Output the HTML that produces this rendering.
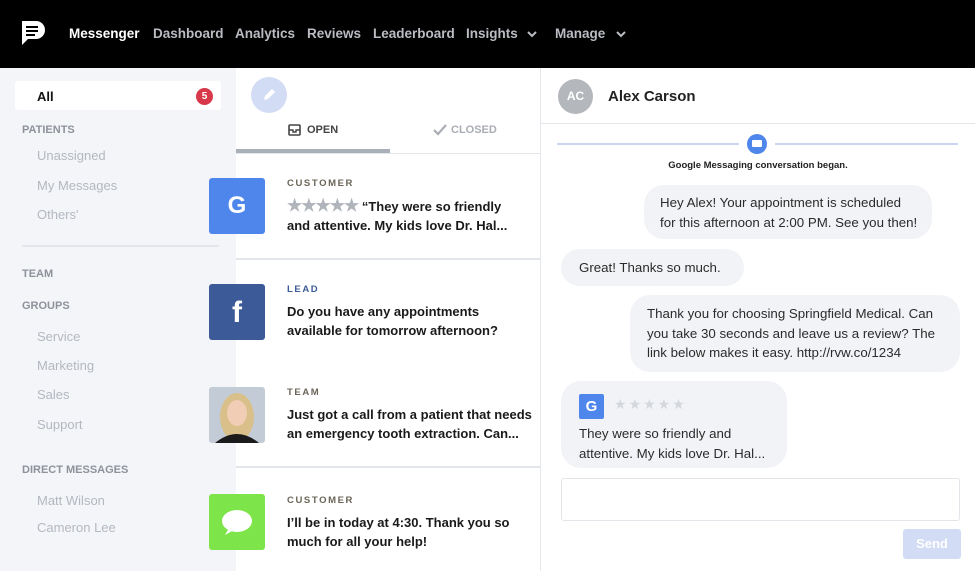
<!DOCTYPE html>
<html><head><meta charset="utf-8"><style>
*{box-sizing:border-box;margin:0;padding:0}
body{width:975px;height:571px;overflow:hidden;font-family:"Liberation Sans",sans-serif;background:#fff;position:relative}
.hdr{position:absolute;left:0;top:0;width:975px;height:68px;background:#000}
.nav{position:absolute;top:26px;font-size:13.5px;font-weight:bold;color:#b9bcc2}
.side{position:absolute;left:0;top:68px;width:236px;height:503px;background:#f4f5f8}
.s{position:absolute;font-size:13px;color:#b3b8c0}
.sh{position:absolute;font-size:11px;font-weight:bold;color:#8d929b}
.list{position:absolute;left:236px;top:68px;width:305px;height:503px;background:#fff;border-right:1px solid #e4e7ec}
.chat{position:absolute;left:541px;top:68px;width:434px;height:503px}
.tag{position:absolute;left:287px;font-size:9.5px;font-weight:bold;letter-spacing:1.6px;color:#6b6558}
.msg{position:absolute;left:287px;font-size:13px;font-weight:bold;color:#1a1a1a;line-height:19px;white-space:nowrap}
.ic{position:absolute;left:209px;width:56px;height:56px;border-radius:3px}
.b{position:absolute;background:#f2f3f6;border-radius:20px;font-size:13.3px;color:#2b2b2b;line-height:19.5px;white-space:nowrap}
.hl{position:absolute;height:1px;background:#e3e6eb}
</style></head><body>
<div class="hdr">
<svg style="position:absolute;left:20px;top:19px" width="27" height="28" viewBox="0 0 27 28"><path d="M2 2h14a9 9 0 0 1 0 18H8l-6 6z" fill="#fff"/><rect x="6" y="7" width="12" height="2" fill="#000"/><rect x="6" y="11" width="12" height="2" fill="#000"/><rect x="6" y="15" width="9" height="2" fill="#000"/></svg>
<div class="nav" style="left:69px;color:#fff">Messenger</div>
<div class="nav" style="left:153px">Dashboard</div>
<div class="nav" style="left:235px">Analytics</div>
<div class="nav" style="left:307px">Reviews</div>
<div class="nav" style="left:373px">Leaderboard</div>
<div class="nav" style="left:466px">Insights</div>
<svg style="position:absolute;left:527px;top:31px" width="10" height="7"><path d="M1 1l4 4 4-4" stroke="#b9bcc2" stroke-width="2" fill="none"/></svg>
<div class="nav" style="left:555px">Manage</div>
<svg style="position:absolute;left:616px;top:31px" width="10" height="7"><path d="M1 1l4 4 4-4" stroke="#b9bcc2" stroke-width="2" fill="none"/></svg>
</div>
<div class="side">
<div style="position:absolute;left:15px;top:13px;width:206px;height:29px;background:#fff;border-radius:3px"></div>
<div style="position:absolute;left:37px;top:21px;font-size:13px;font-weight:bold;color:#111">All</div>
<div style="position:absolute;left:196px;top:20px;width:17px;height:17px;border-radius:50%;background:#d8394a;color:#fff;font-size:10px;font-weight:bold;text-align:center;line-height:17px">5</div>
<div class="sh" style="left:22px;top:56px">PATIENTS</div>
<div class="s" style="left:37px;top:80px">Unassigned</div>
<div class="s" style="left:37px;top:110px">My Messages</div>
<div class="s" style="left:37px;top:139px">Others'</div>
<div class="hl" style="left:22px;top:177px;width:197px;height:2px"></div>
<div class="sh" style="left:22px;top:200px">TEAM</div>
<div class="sh" style="left:22px;top:232px">GROUPS</div>
<div class="s" style="left:37px;top:261px">Service</div>
<div class="s" style="left:37px;top:290px">Marketing</div>
<div class="s" style="left:37px;top:319px">Sales</div>
<div class="s" style="left:37px;top:349px">Support</div>
<div class="sh" style="left:22px;top:396px">DIRECT MESSAGES</div>
<div class="s" style="left:37px;top:425px">Matt Wilson</div>
<div class="s" style="left:37px;top:452px">Cameron Lee</div>
</div>
<div class="list">
<div style="position:absolute;left:15px;top:9px;width:36px;height:36px;border-radius:50%;background:#d3dcf5"></div>
<svg style="position:absolute;left:25px;top:19px" width="16" height="16"><path d="M3 13l1-4 7-7 3 3-7 7z" fill="#fff"/></svg>
<svg style="position:absolute;left:52px;top:56px" width="13" height="12"><rect x="1" y="1" width="11" height="10" rx="1" fill="none" stroke="#444" stroke-width="1.6"/><path d="M1 6h4v2h3V6h4" stroke="#444" stroke-width="1.4" fill="none"/></svg>
<div style="position:absolute;left:71px;top:56px;font-size:11px;font-weight:bold;color:#444">OPEN</div>
<svg style="position:absolute;left:197px;top:56px" width="14" height="12"><path d="M1 6l4 4 8-9" stroke="#a9adb4" stroke-width="2.2" fill="none"/></svg>
<div style="position:absolute;left:215px;top:56px;font-size:11px;font-weight:bold;color:#a9adb4">CLOSED</div>
<div style="position:absolute;left:0;top:81px;width:154px;height:4px;background:#a9b0b8"></div>
<div class="hl" style="left:0;top:85px;width:305px"></div>
<div class="hl" style="left:0;top:190px;width:305px;height:2px"></div>
<div class="hl" style="left:0;top:398px;width:305px;height:2px"></div>
</div>
<div class="ic" style="top:178px;background:#4f86ec;color:#fff;font-size:24px;font-weight:bold;text-align:center;line-height:56px">G</div>
<div class="tag" style="top:178px">CUSTOMER</div>
<div class="msg" style="top:196px"><span style="color:#b0b4bb;font-size:17px;letter-spacing:-1px">★★★★★</span> “They were so friendly<br>and attentive. My kids love Dr. Hal...</div>
<div class="ic" style="top:284px;background:#3d5a98;color:#fff;font-size:30px;font-weight:bold;text-align:center;line-height:58px">f</div>
<div class="tag" style="top:284px;color:#3d5a98">LEAD</div>
<div class="msg" style="top:302px">Do you have any appointments<br>available for tomorrow afternoon?</div>
<div class="ic" style="top:387px;background:#c3ccd6;overflow:hidden"><svg width="56" height="56"><ellipse cx="28" cy="30" rx="17" ry="24" fill="#d9bf8a"/><ellipse cx="28" cy="26" rx="10" ry="13" fill="#f0cdb4"/><path d="M6 56q22-18 44 0z" fill="#1b1b1b"/></svg></div>
<div class="tag" style="top:387px">TEAM</div>
<div class="msg" style="top:405px">Just got a call from a patient that needs<br>an emergency tooth extraction. Can...</div>
<div class="ic" style="top:494px;background:#7de449"><svg width="56" height="56"><ellipse cx="28" cy="27" rx="15" ry="11" fill="#fff"/><path d="M20 34l-4 7 9-5z" fill="#fff"/></svg></div>
<div class="tag" style="top:495px">CUSTOMER</div>
<div class="msg" style="top:513px">I’ll be in today at 4:30. Thank you so<br>much for all your help!</div>
<div class="chat">
<div style="position:absolute;left:17px;top:11px;width:35px;height:35px;border-radius:50%;background:#b4b8bd;color:#fff;font-size:12px;font-weight:bold;text-align:center;line-height:35px">AC</div>
<div style="position:absolute;left:67px;top:20px;font-size:15px;font-weight:bold;color:#222">Alex Carson</div>
<div class="hl" style="left:0;top:55px;width:434px"></div>
<div style="position:absolute;left:16px;top:75px;width:182px;height:2px;background:#c9d5f3"></div>
<div style="position:absolute;left:234px;top:75px;width:183px;height:2px;background:#c9d5f3"></div>
<div style="position:absolute;left:206px;top:66px;width:20px;height:20px;border-radius:50%;background:#4f86ec"></div>
<div style="position:absolute;left:211px;top:72px;width:10px;height:7px;background:#fff;border-radius:1px"></div>
<div style="position:absolute;left:0;width:434px;top:92px;text-align:center;font-size:9.5px;font-weight:bold;color:#222">Google Messaging conversation began.</div>
<div class="b" style="left:103px;top:117px;width:288px;height:54px;padding:8px 0 0 16px">Hey Alex! Your appointment is scheduled<br>for this afternoon at 2:00 PM. See you then!</div>
<div class="b" style="left:20px;top:181px;width:183px;height:37px;padding:9px 0 0 18px">Great! Thanks so much.</div>
<div class="b" style="left:89px;top:227px;width:330px;height:77px;padding:9px 0 0 17px">Thank you for choosing Springfield Medical. Can<br>you take 30 seconds and leave us a review? The<br>link below makes it easy. http://rvw.co/1234</div>
<div class="b" style="left:20px;top:313px;width:226px;height:87px;padding:0 0 0 18px">
<div style="position:absolute;left:18px;top:13px;width:25px;height:25px;background:#4f86ec;border-radius:2px;color:#fff;font-weight:bold;font-size:15px;text-align:center;line-height:25px">G</div>
<div style="position:absolute;left:53px;top:14px;color:#d4d7dc;font-size:14px;letter-spacing:2px">★★★★★</div>
<div style="position:absolute;left:18px;top:43px">They were so friendly and<br>attentive. My kids love Dr. Hal...</div></div>
<div style="position:absolute;left:20px;top:410px;width:399px;height:43px;border:1px solid #e2e5ea;border-radius:3px;background:#fff"></div>
<div style="position:absolute;left:362px;top:461px;width:58px;height:30px;background:#d3dcf5;border-radius:3px;color:#fff;font-weight:bold;font-size:13px;text-align:center;line-height:30px">Send</div>
</div>
</body></html>
